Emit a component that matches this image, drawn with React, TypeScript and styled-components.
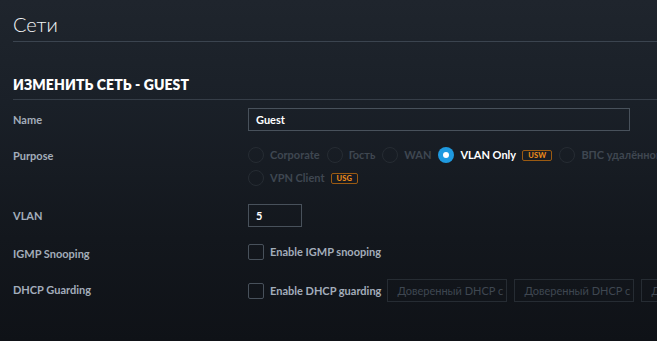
import React from 'react';
import styled, { createGlobalStyle, css } from 'styled-components';

const GlobalStyle = createGlobalStyle`
    html, body {
        margin: 0;
        padding: 0;
        height: 100%;
    }
    body {
        font-family: Lato, 'Noto Sans', sans-serif;
        background: #151a20;
        overflow: hidden;
    }
`;

const Page = styled.div`
    width: 657px;
    height: 341px;
    box-sizing: border-box;
    padding: 0 0 0 13px;
    background: linear-gradient(180deg, #1f252d 0%, #1a2028 30%, #13171d 70%, #0f1217 100%);
    overflow: hidden;
`;

const TitleBar = styled.div`
    height: 42px;
    box-sizing: border-box;
    padding-top: 12px;
    border-bottom: 1px solid #3b444f;
`;

const Title = styled.h1`
    margin: 0;
    font-size: 20px;
    font-weight: 300;
    color: #f2f4f6;
    line-height: 24px;
`;

const SectionHead = styled.h2`
    margin: 0;
    padding: 34px 0 5px;
    font-size: 14px;
    font-weight: 800;
    letter-spacing: 0.1px;
    color: #ffffff;
    line-height: 18px;
    border-bottom: 1px solid #363e48;
`;

const Form = styled.div`
    display: flex;
    flex-direction: column;
    padding-top: 8px;
`;

const Row = styled.div<{ $mt?: number }>`
    display: grid;
    grid-template-columns: 235px 1fr;
    align-items: start;
    margin-top: ${({ $mt }) => $mt ?? 0}px;
`;

const Label = styled.div<{ $pt: number }>`
    padding-top: ${({ $pt }) => $pt}px;
    font-size: 11px;
    font-weight: 700;
    color: #a3adba;
    line-height: 14px;
`;

const TextInput = styled.div<{ $w: number; $muted?: boolean }>`
    width: ${({ $w }) => $w}px;
    height: 23px;
    box-sizing: border-box;
    flex-shrink: 0;
    display: flex;
    align-items: center;
    padding: 0 ${({ $muted }) => ($muted ? 9 : 7)}px;
    border: 1px solid ${({ $muted }) => ($muted ? '#262c33' : '#48515b')};
    font-size: 11px;
    font-weight: ${({ $muted }) => ($muted ? 400 : 700)};
    color: ${({ $muted }) => ($muted ? '#3f4751' : '#ffffff')};
    white-space: nowrap;
    overflow: hidden;
    text-overflow: clip;
`;

const OptionWrap = styled.div`
    display: flex;
    flex-direction: column;
    gap: 7px;
`;

const OptionLine = styled.div`
    display: flex;
    align-items: center;
    gap: 7px;
    white-space: nowrap;
`;

const Option = styled.div`
    display: flex;
    align-items: center;
    gap: 6px;
`;

const Radio = styled.span<{ $on?: boolean }>`
    width: 16px;
    height: 16px;
    box-sizing: border-box;
    border-radius: 50%;
    flex-shrink: 0;
    ${({ $on }) =>
        $on
            ? css`
                  background: #1f9ae0;
                  display: flex;
                  align-items: center;
                  justify-content: center;
                  &::after {
                      content: '';
                      width: 6px;
                      height: 6px;
                      border-radius: 50%;
                      background: #ffffff;
                  }
              `
            : css`
                  border: 1px solid #262c33;
              `}
`;

const OptionText = styled.span<{ $on?: boolean }>`
    font-size: 11px;
    font-weight: 700;
    color: ${({ $on }) => ($on ? '#ffffff' : '#3f4751')};
    line-height: 14px;
`;

const Badge = styled.span`
    font-size: 7.5px;
    font-weight: 900;
    color: #e8891a;
    border: 1px solid #9a5a12;
    border-radius: 2px;
    padding: 1px 5px;
    line-height: 7px;
    letter-spacing: 0.2px;
`;

const Box = styled.span`
    width: 16px;
    height: 16px;
    box-sizing: border-box;
    border: 1px solid #48515b;
    border-radius: 2px;
    flex-shrink: 0;
`;

const CheckText = styled.span`
    font-size: 11px;
    font-weight: 700;
    color: #a3adba;
    line-height: 14px;
`;

const CheckLine = styled.div`
    display: flex;
    align-items: center;
    gap: 6px;
    white-space: nowrap;
`;

const Trusted = styled.div`
    display: flex;
    gap: 7px;
`;

const App: React.FC = () => {
    return (
        <Page>
            <GlobalStyle />
            <TitleBar>
                <Title>Сети</Title>
            </TitleBar>
            <SectionHead>ИЗМЕНИТЬ СЕТЬ - GUEST</SectionHead>
            <Form>
                <Row>
                    <Label $pt={5}>Name</Label>
                    <TextInput $w={382}>Guest</TextInput>
                </Row>
                <Row $mt={16}>
                    <Label $pt={2}>Purpose</Label>
                    <OptionWrap>
                        <OptionLine>
                            <Option>
                                <Radio />
                                <OptionText>Corporate</OptionText>
                            </Option>
                            <Option>
                                <Radio />
                                <OptionText>Гость</OptionText>
                            </Option>
                            <Option>
                                <Radio />
                                <OptionText>WAN</OptionText>
                            </Option>
                            <Option>
                                <Radio $on />
                                <OptionText $on>VLAN Only</OptionText>
                                <Badge>USW</Badge>
                            </Option>
                            <Option>
                                <Radio />
                                <OptionText>ВПС удалённого</OptionText>
                            </Option>
                        </OptionLine>
                        <OptionLine>
                            <Option>
                                <Radio />
                                <OptionText>VPN Client</OptionText>
                                <Badge>USG</Badge>
                            </Option>
                        </OptionLine>
                    </OptionWrap>
                </Row>
                <Row $mt={18}>
                    <Label $pt={5}>VLAN</Label>
                    <TextInput $w={54}>5</TextInput>
                </Row>
                <Row $mt={17}>
                    <Label $pt={3}>IGMP Snooping</Label>
                    <CheckLine>
                        <Box />
                        <CheckText>Enable IGMP snooping</CheckText>
                    </CheckLine>
                </Row>
                <Row $mt={18}>
                    <Label $pt={4}>DHCP Guarding</Label>
                    <CheckLine>
                        <Box />
                        <CheckText>Enable DHCP guarding</CheckText>
                        <Trusted>
                            <TextInput $w={120} $muted>Доверенный DHCP с</TextInput>
                            <TextInput $w={120} $muted>Доверенный DHCP с</TextInput>
                            <TextInput $w={120} $muted>Д</TextInput>
                        </Trusted>
                    </CheckLine>
                </Row>
            </Form>
        </Page>
    );
};

export default App;
